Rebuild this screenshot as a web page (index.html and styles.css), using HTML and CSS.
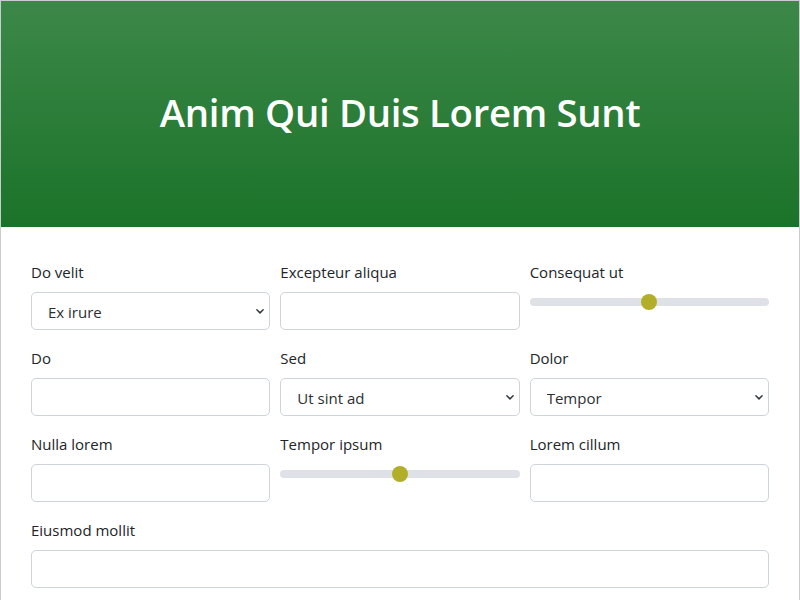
FILE: index.html
```html
<!DOCTYPE html>
<html lang="en">
<head>
<meta charset="utf-8">
<title>Form</title>
<link rel="stylesheet" href="styles.css">
</head>
<body>
<div class="frame">
  <header class="hero">
    <h1 class="hero-title">Anim Qui Duis Lorem Sunt</h1>
  </header>
  <main class="content">
    <form class="form-grid">
      <div class="field">
        <label class="field-label">Do velit</label>
        <select class="field-select"><option>Ex irure</option></select>
      </div>
      <div class="field">
        <label class="field-label">Excepteur aliqua</label>
        <input class="field-input" type="text">
      </div>
      <div class="field">
        <label class="field-label">Consequat ut</label>
        <input class="field-range" type="range" min="0" max="100" value="50">
      </div>

      <div class="field">
        <label class="field-label">Do</label>
        <input class="field-input" type="text">
      </div>
      <div class="field">
        <label class="field-label">Sed</label>
        <select class="field-select"><option>Ut sint ad</option></select>
      </div>
      <div class="field">
        <label class="field-label">Dolor</label>
        <select class="field-select"><option>Tempor</option></select>
      </div>

      <div class="field">
        <label class="field-label">Nulla lorem</label>
        <input class="field-input" type="text">
      </div>
      <div class="field">
        <label class="field-label">Tempor ipsum</label>
        <input class="field-range" type="range" min="0" max="100" value="50">
      </div>
      <div class="field">
        <label class="field-label">Lorem cillum</label>
        <input class="field-input" type="text">
      </div>

      <div class="field field-wide">
        <label class="field-label">Eiusmod mollit</label>
        <input class="field-input" type="text">
      </div>
    </form>
  </main>
</div>
</body>
</html>
```

FILE: styles.css
```css
* { box-sizing: border-box; }

html, body {
  margin: 0;
  padding: 0;
  background: #ffffff;
}

body {
  font-family: "Open Sans", "Noto Sans", "Liberation Sans", sans-serif;
  color: #212529;
  font-size: 16px;
  line-height: 24px;
}

.frame {
  width: 800px;
  height: 600px;
  border: 1px solid #c9cdd1;
  border-bottom: 0;
  overflow: hidden;
}

.hero {
  height: 226px;
  padding-bottom: 3px;
  display: flex;
  align-items: center;
  justify-content: center;
  background-color: #1b7329;
  background-image: linear-gradient(180deg, rgba(255,255,255,0.15), rgba(255,255,255,0));
}

.hero-title {
  margin: 0;
  color: #ffffff;
  font-size: 38.3px;
  font-weight: 600;
  line-height: 1.2;
  letter-spacing: -0.3px;
}

.content {
  padding: 33px 30px 0 30px;
}

.form-grid {
  display: grid;
  grid-template-columns: 1fr 1fr 1fr;
  column-gap: 10px;
  row-gap: 16px;
}

.field {
  display: flex;
  flex-direction: column;
  min-width: 0;
}

.field-wide {
  grid-column: 1 / -1;
}

.field-label {
  display: block;
  margin-bottom: 8px;
  font-size: 15px;
  line-height: 24px;
  color: #212529;
}

.field-input,
.field-select {
  display: block;
  width: 100%;
  height: 38px;
  margin: 0;
  border: 1px solid #ced4da;
  border-radius: 5px;
  background-color: #ffffff;
  font-family: inherit;
  font-size: 15px;
  color: #2b2f33;
  outline: none;
}

.field-input {
  padding: 6px 12px;
}

.field-select {
  -webkit-appearance: none;
  appearance: none;
  padding: 1px 36px 0 16px;
  background-image: url("data:image/svg+xml,%3csvg xmlns='http://www.w3.org/2000/svg' viewBox='0 0 16 16'%3e%3cpath fill='none' stroke='%23343a40' stroke-linecap='round' stroke-linejoin='round' stroke-width='2.4' d='M3 6l5 5 5-5'/%3e%3c/svg%3e");
  background-repeat: no-repeat;
  background-position: right 4px center;
  background-size: 10px 10px;
}

.field-range {
  -webkit-appearance: none;
  appearance: none;
  display: block;
  width: 100%;
  height: 20px;
  margin: 0;
  padding: 0;
  background: transparent;
}

.field-range::-webkit-slider-runnable-track {
  height: 8px;
  border-radius: 8px;
  background: #dee2e6;
}

.field-range::-webkit-slider-thumb {
  -webkit-appearance: none;
  appearance: none;
  width: 16px;
  height: 16px;
  margin-top: -4px;
  border: 0;
  border-radius: 50%;
  background: #b2ae2a;
}
```
